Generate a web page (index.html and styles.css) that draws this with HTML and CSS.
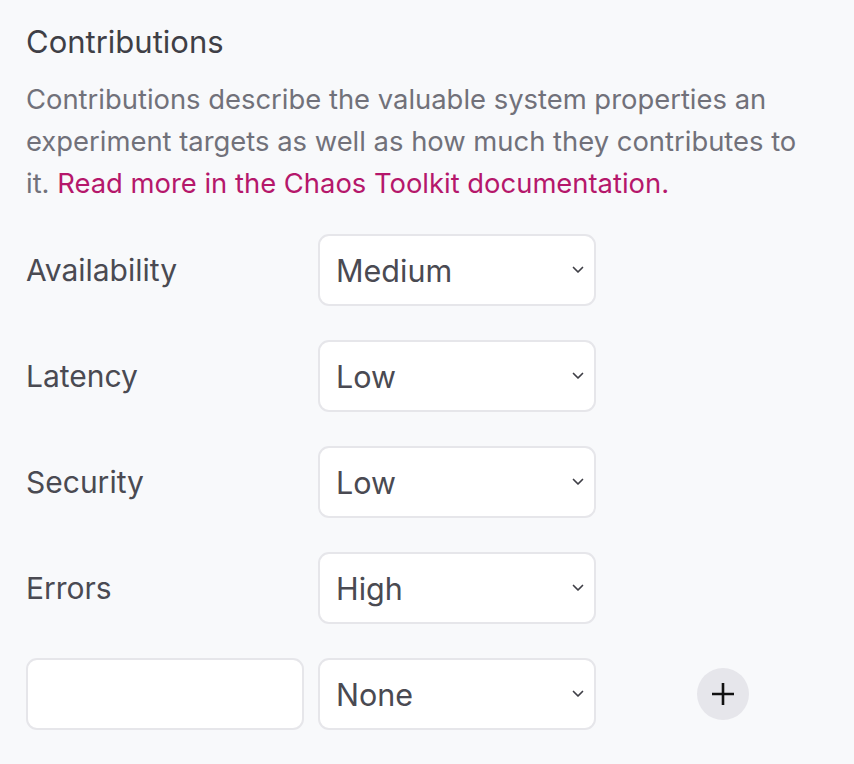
FILE: index.html
```html
<!DOCTYPE html>
<html>
<head>
<meta charset="utf-8">
<link rel="stylesheet" href="styles.css">
</head>
<body>
<section class="panel">
  <h2 class="title">Contributions</h2>
  <p class="desc">Contributions describe the valuable system properties an experiment targets as well as how much they contributes to it. <a class="link" href="#">Read more in the Chaos Toolkit documentation.</a></p>
  <div class="grid">
    <label class="label">Availability</label>
    <div class="select-wrap">
      <select class="select"><option>Medium</option></select>
      <svg class="chev" viewBox="0 0 12 8" width="12" height="8"><path d="M1.5 1.5 L6 6 L10.5 1.5" fill="none" stroke="#3f3f46" stroke-width="1.7" stroke-linecap="round" stroke-linejoin="round"/></svg>
    </div>
    <div></div>

    <label class="label">Latency</label>
    <div class="select-wrap">
      <select class="select"><option>Low</option></select>
      <svg class="chev" viewBox="0 0 12 8" width="12" height="8"><path d="M1.5 1.5 L6 6 L10.5 1.5" fill="none" stroke="#3f3f46" stroke-width="1.7" stroke-linecap="round" stroke-linejoin="round"/></svg>
    </div>
    <div></div>

    <label class="label">Security</label>
    <div class="select-wrap">
      <select class="select"><option>Low</option></select>
      <svg class="chev" viewBox="0 0 12 8" width="12" height="8"><path d="M1.5 1.5 L6 6 L10.5 1.5" fill="none" stroke="#3f3f46" stroke-width="1.7" stroke-linecap="round" stroke-linejoin="round"/></svg>
    </div>
    <div></div>

    <label class="label">Errors</label>
    <div class="select-wrap">
      <select class="select"><option>High</option></select>
      <svg class="chev" viewBox="0 0 12 8" width="12" height="8"><path d="M1.5 1.5 L6 6 L10.5 1.5" fill="none" stroke="#3f3f46" stroke-width="1.7" stroke-linecap="round" stroke-linejoin="round"/></svg>
    </div>
    <div></div>

    <input class="input" type="text">
    <div class="select-wrap">
      <select class="select"><option>None</option></select>
      <svg class="chev" viewBox="0 0 12 8" width="12" height="8"><path d="M1.5 1.5 L6 6 L10.5 1.5" fill="none" stroke="#3f3f46" stroke-width="1.7" stroke-linecap="round" stroke-linejoin="round"/></svg>
    </div>
    <div class="add-cell">
      <button class="add" type="button" aria-label="Add">
        <svg viewBox="0 0 24 24" width="24" height="24"><path d="M12 1 V23 M1 12 H23" stroke="#111" stroke-width="2.6" fill="none"/></svg>
      </button>
    </div>
  </div>
</section>
</body>
</html>
```

FILE: styles.css
```css
html, body {
  margin: 0;
  padding: 0;
  background: #f8f9fb;
}
body {
  font-family: "Inter", "Liberation Sans", sans-serif;
  color: #52525b;
}
.panel {
  padding: 22px 26px 0 26px;
}
.title {
  margin: 0;
  font-size: 31px;
  line-height: 40px;
  font-weight: 400;
  color: #3f3f46;
}
.desc {
  margin: 16px 0 0 0;
  font-size: 27.4px;
  line-height: 42px;
  color: #71717a;
  max-width: 790px;
}
.link {
  color: #b5176b;
  text-decoration: none;
}
.grid {
  margin-top: 30px;
  display: grid;
  grid-template-columns: 278px 278px 1fr;
  column-gap: 14px;
  row-gap: 34px;
  align-items: center;
}
.label {
  font-size: 30px;
  color: #4a4a52;
}
.select-wrap {
  position: relative;
  height: 72px;
}
.select {
  appearance: none;
  -webkit-appearance: none;
  width: 100%;
  height: 72px;
  box-sizing: border-box;
  border: 2px solid #e6e6ea;
  border-radius: 11px;
  background: #fff;
  font-family: inherit;
  font-size: 30.5px;
  color: #4a4a52;
  padding: 0 0 0 16px;
  margin: 0;
}
.chev {
  position: absolute;
  right: 12px;
  top: 32px;
}
.input {
  width: 100%;
  height: 72px;
  box-sizing: border-box;
  border: 2px solid #e6e6ea;
  border-radius: 11px;
  background: #fff;
  margin: 0;
  padding: 0 16px;
  font-size: 28px;
}
.add-cell {
  display: flex;
  align-items: center;
}
.add {
  margin-left: 87px;
  width: 52px;
  height: 52px;
  border-radius: 50%;
  border: none;
  background: #e6e6eb;
  display: flex;
  align-items: center;
  justify-content: center;
  padding: 0;
}
```
